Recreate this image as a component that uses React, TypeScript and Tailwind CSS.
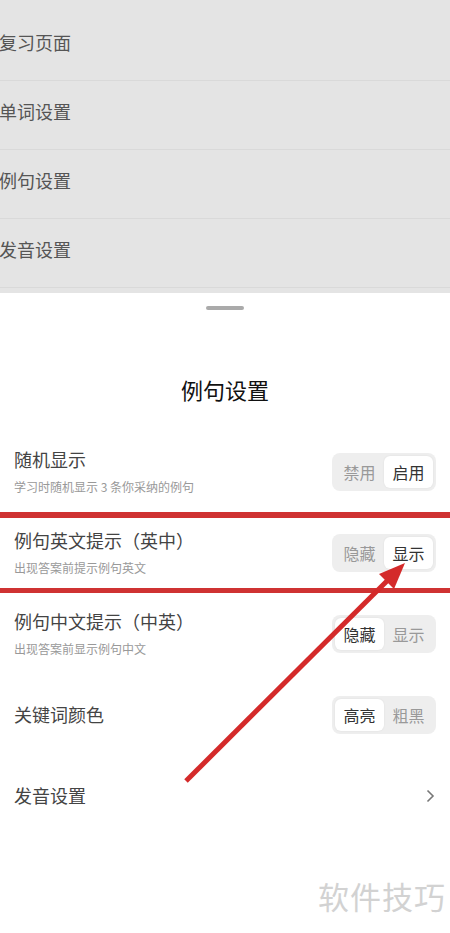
import React from "react";

const menu = ["复习页面", "单词设置", "例句设置", "发音设置"];

interface Row {
  title: string;
  sub?: string;
  options?: [string, string];
  active?: 0 | 1;
  link?: boolean;
}

const rows: Row[] = [
  { title: "随机显示", sub: "学习时随机显示 3 条你采纳的例句", options: ["禁用", "启用"], active: 1 },
  { title: "例句英文提示（英中）", sub: "出现答案前提示例句英文", options: ["隐藏", "显示"], active: 1 },
  { title: "例句中文提示（中英）", sub: "出现答案前显示例句中文", options: ["隐藏", "显示"], active: 0 },
  { title: "关键词颜色", options: ["高亮", "粗黑"], active: 0 },
  { title: "发音设置", link: true },
];

function Segmented({ options, active }: { options: [string, string]; active: 0 | 1 }) {
  return (
    <div className="flex w-[104px] h-[38px] rounded-[8px] bg-[#eeeeee] p-[3px]">
      {options.map((o, i) => (
        <div
          key={o}
          className={`flex-1 flex items-center justify-center rounded-[6px] text-[16px] ${
            i === active ? "bg-white text-[#333] shadow-[0_0_2px_rgba(0,0,0,0.08)]" : "text-[#999]"
          }`}
        >
          {o}
        </div>
      ))}
    </div>
  );
}

export default function App() {
  return (
    <div className="relative w-[450px] h-[933px] overflow-hidden bg-white font-['Noto_Sans_CJK_SC','Noto_Sans',sans-serif]">
      {/* background page, dimmed */}
      <div className="bg-[#e4e4e4] pt-[12px] pb-[5px]">
        {menu.map((m) => (
          <div key={m} className="h-[69px] flex items-center pb-[7px] border-b border-[#d9d9d9] text-[18px] text-[#555] -ml-[1px]">
            {m}
          </div>
        ))}
      </div>

      {/* bottom sheet */}
      <div className="bg-white">
        <div className="flex justify-center pt-[13px]">
          <div className="w-[38px] h-[4px] rounded-full bg-[#aaaaaa]" />
        </div>
        <h1 className="mt-[64px] text-center text-[22px] leading-[30px] text-[#111]">例句设置</h1>
        <div className="mt-[27px]">
          {rows.map((r) => (
            <div key={r.title} className="h-[81px] flex items-center justify-between px-[14px]">
              <div className="-mt-[2px]">
                <div className="text-[18px] leading-[26px] text-[#444]">{r.title}</div>
                {r.sub && <div className="mt-[6px] text-[12px] leading-[18px] text-[#999]">{r.sub}</div>}
              </div>
              {r.options && <Segmented options={r.options} active={r.active ?? 0} />}
              {r.link && (
                <svg width="10" height="14" viewBox="0 0 10 14" className="mr-[1px]">
                  <path d="M2.5 1.5 L8 7 L2.5 12.5" fill="none" stroke="#777" strokeWidth="1.6" />
                </svg>
              )}
            </div>
          ))}
        </div>
      </div>

      {/* annotation */}
      <div className="absolute left-0 top-[512px] w-full h-[6px] bg-[#cf3232]" />
      <div className="absolute left-0 top-[588px] w-full h-[5px] bg-[#cf3232]" />
      <svg className="absolute inset-0" width="450" height="933" viewBox="0 0 450 933">
        <line x1="186" y1="781" x2="392" y2="576" stroke="#d42a2a" strokeWidth="5" />
        <polygon points="405,563 379,574 394,589" fill="#d42a2a" />
      </svg>

      <div className="absolute right-[4px] top-[878px] text-[31px] leading-[36px] text-[#d2d2d2] tracking-[1px]">
        软件技巧
      </div>
    </div>
  );
}
